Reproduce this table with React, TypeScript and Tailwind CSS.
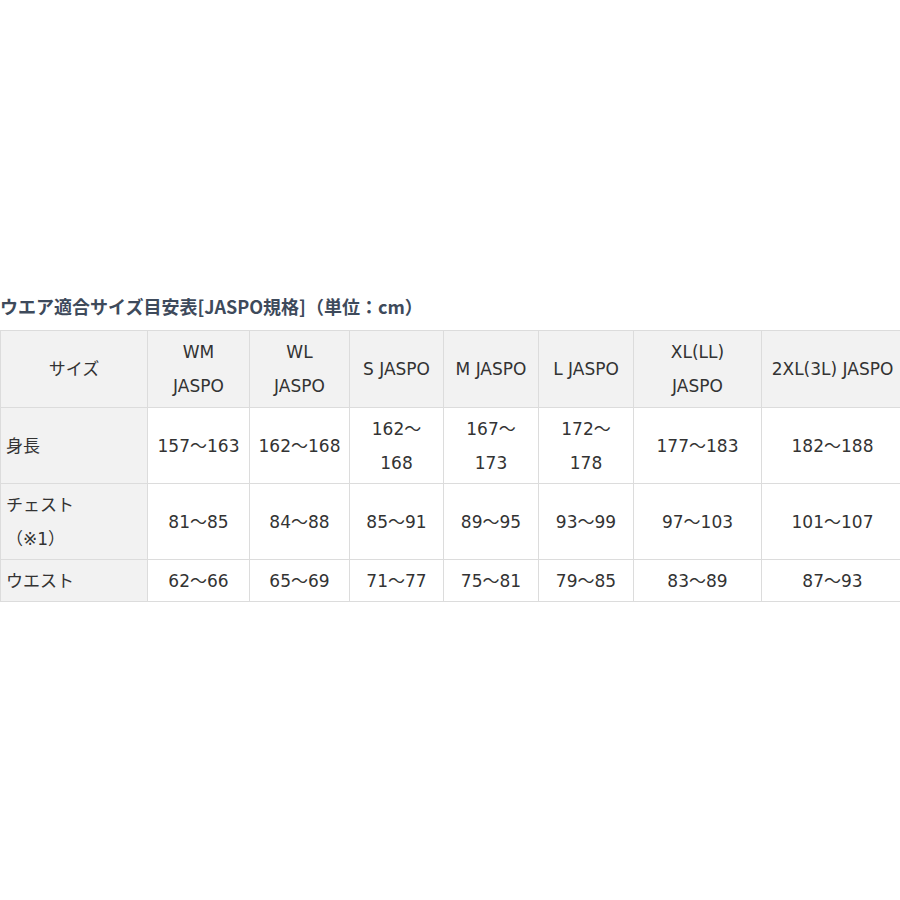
import React from "react";

const font = { fontFamily: '"DejaVu Sans", "Noto Sans CJK JP", sans-serif' };
const titleFont = { fontFamily: '"Noto Sans CJK JP", "Noto Sans", sans-serif' };

const header = [
  ["サイズ"],
  ["WM", "JASPO"],
  ["WL", "JASPO"],
  ["S JASPO"],
  ["M JASPO"],
  ["L JASPO"],
  ["XL(LL)", "JASPO"],
  ["2XL(3L) JASPO"],
];

const rows: string[][][] = [
  [["身長"], ["157～163"], ["162～168"], ["162～", "168"], ["167～", "173"], ["172～", "178"], ["177～183"], ["182～188"]],
  [["チェスト", "（※1）"], ["81～85"], ["84～88"], ["85～91"], ["89～95"], ["93～99"], ["97～103"], ["101～107"]],
  [["ウエスト"], ["62～66"], ["65～69"], ["71～77"], ["75～81"], ["79～85"], ["83～89"], ["87～93"]],
];

const widths = [147, 102, 100, 94, 95, 95, 128, 142];

function Lines({ lines }: { lines: string[] }) {
  return (
    <>
      {lines.map((l, i) => (
        <div key={i}>{l}</div>
      ))}
    </>
  );
}

export default function App() {
  return (
    <div className="w-[900px] h-[900px] overflow-hidden bg-white text-[#333]" style={font}>
      <div className="pt-[293px]">
        <h2
          className="text-[18px] leading-[26px] font-bold text-[#3e4a5b] mb-[11px] whitespace-nowrap"
          style={titleFont}
        >
          ウエア適合サイズ目安表[JASPO規格]（単位：cm）
        </h2>
        <table className="table-fixed border-collapse w-[903px] text-[17px] leading-[34px]">
          <colgroup>
            {widths.map((w, i) => (
              <col key={i} style={{ width: w }} />
            ))}
          </colgroup>
          <thead>
            <tr className="h-[77px] bg-[#f2f2f2]">
              {header.map((h, i) => (
                <th key={i} className="border border-[#dcdcdc] font-normal text-center align-middle px-0 whitespace-nowrap">
                  <Lines lines={h} />
                </th>
              ))}
            </tr>
          </thead>
          <tbody>
            {rows.map((r, ri) => (
              <tr key={ri} className={ri === 2 ? "h-[42px]" : "h-[76px]"}>
                {r.map((c, ci) => (
                  <td
                    key={ci}
                    className={
                      ci === 0
                        ? "border border-[#dcdcdc] bg-[#f2f2f2] text-left align-middle pl-[5px] whitespace-nowrap"
                        : "border border-[#dcdcdc] bg-white text-center align-middle px-0 whitespace-nowrap"
                    }
                  >
                    <Lines lines={c} />
                  </td>
                ))}
              </tr>
            ))}
          </tbody>
        </table>
      </div>
    </div>
  );
}
